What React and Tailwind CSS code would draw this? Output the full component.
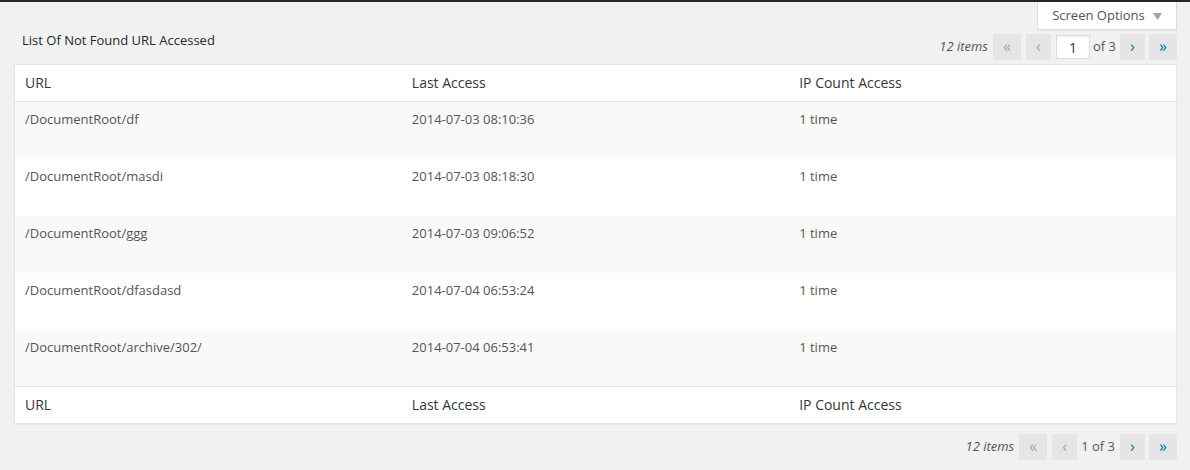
import React from "react";

const rows = [
  ["/DocumentRoot/df", "2014-07-03 08:10:36", "1 time"],
  ["/DocumentRoot/masdi", "2014-07-03 08:18:30", "1 time"],
  ["/DocumentRoot/ggg", "2014-07-03 09:06:52", "1 time"],
  ["/DocumentRoot/dfasdasd", "2014-07-04 06:53:24", "1 time"],
  ["/DocumentRoot/archive/302/", "2014-07-04 06:53:41", "1 time"],
];

function NavBtn({ children, disabled, wide }) {
  return (
    <span
      className={
        "inline-flex h-[26px] items-center justify-center bg-[#e5e5e5] pb-[3px] text-[16px] leading-none " +
        (wide ? "w-[28px] " : "w-[25px] ") +
        (disabled ? "text-[#a0a5aa]" : "text-[#0073aa]")
      }
    >
      {children}
    </span>
  );
}

function Pagination({ input }) {
  return (
    <div className="flex items-center text-[13px] text-[#555]">
      <span className="mr-[5px] italic">12 items</span>
      <NavBtn disabled wide>«</NavBtn>
      <span className="w-[5px]" />
      <NavBtn disabled>‹</NavBtn>
      {input ? (
        <>
          <span className="ml-[5px] flex h-[24px] w-[34px] items-center justify-center border border-[#ddd] bg-white text-[14px] text-[#32373c] shadow-[inset_0_1px_2px_rgba(0,0,0,0.07)]">
            1
          </span>
          <span className="ml-[3px] mr-[4px]">of 3</span>
        </>
      ) : (
        <span className="ml-[4px] mr-[5px] text-[#555]">1 of 3</span>
      )}
      <NavBtn>›</NavBtn>
      <span className="w-[4px]" />
      <NavBtn wide>»</NavBtn>
    </div>
  );
}

function HeadRow() {
  const cls = "h-[36px] px-[10px] pb-[2px] text-left text-[14px] font-normal text-[#32373c]";
  return (
    <>
      <th className={cls}>URL</th>
      <th className={cls}>Last Access</th>
      <th className={cls}>IP Count Access</th>
    </>
  );
}

export default function App() {
  return (
    <div
      className="min-h-[470px] w-full bg-[#f1f1f1] text-[13px] text-[#444]"
      style={{ fontFamily: '"Open Sans", "Liberation Sans", sans-serif' }}
    >
      <div className="h-[2px] bg-[#23282d]" />
      <div className="pl-[14px] pr-[13px]">
        <div className="flex justify-end">
          <div className="flex h-[28px] w-[140px] items-center justify-center gap-[8px] border-x border-b border-[#ddd] bg-white text-[13px] text-[#555] shadow-[0_1px_1px_rgba(0,0,0,0.04)]">
            <span>Screen Options</span>
            <svg width="9" height="7" viewBox="0 0 9 7" className="mt-[1px]">
              <path d="M0 0 L9 0 L4.5 7 Z" fill="#a0a5aa" />
            </svg>
          </div>
        </div>
        <div className="flex h-[34px] items-start justify-between">
          <div className="ml-[8px] mt-[1px] leading-[18px] text-[#23282d]">
            List Of Not Found URL Accessed
          </div>
          <div className="mt-[4px]">
            <Pagination input />
          </div>
        </div>
        <table className="w-full table-fixed border-collapse border border-[#e5e5e5] bg-white shadow-[0_1px_1px_rgba(0,0,0,0.04)]">
          <thead>
            <tr className="h-[37px] border-b border-[#e1e1e1]">
              <HeadRow />
            </tr>
          </thead>
          <tbody>
            {rows.map((r, i) => (
              <tr key={i} className={i % 2 === 0 ? "bg-[#f9f9f9]" : "bg-white"}>
                {r.map((c, j) => (
                  <td key={j} className="h-[57px] px-[10px] pt-[8px] align-top leading-[19px] text-[#555]">
                    {c}
                  </td>
                ))}
              </tr>
            ))}
          </tbody>
          <tfoot>
            <tr className="h-[37px] border-t border-[#e1e1e1]">
              <HeadRow />
            </tr>
          </tfoot>
        </table>
        <div className="mt-[10px] flex justify-end">
          <Pagination />
        </div>
      </div>
    </div>
  );
}
